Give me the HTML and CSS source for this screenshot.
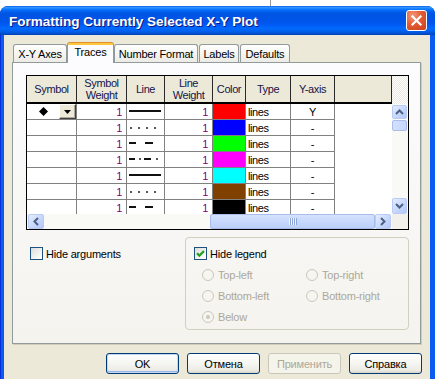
FILE: index.html
```html
<!DOCTYPE html>
<html>
<head>
<meta charset="utf-8">
<link rel="stylesheet" href="styles.css">
</head>
<body>
<div class="desk"><span class="desk-line"></span></div>
<div class="window">
  <div class="titlebar">
    <span class="title">Formatting Currently Selected X-Y Plot</span>
    <div class="close">
      <svg width="13" height="13" viewBox="0 0 13 13"><path d="M2.5 2.5 L10.5 10.5 M10.5 2.5 L2.5 10.5" stroke="#fff" stroke-width="2.2" stroke-linecap="square"/></svg>
    </div>
  </div>
  <div class="client">
    <div class="tabs">
      <div class="tab t1">X-Y Axes</div>
      <div class="tab active t2">Traces</div>
      <div class="tab t3">Number Format</div>
      <div class="tab t4">Labels</div>
      <div class="tab t5">Defaults</div>
    </div>
    <div class="panel">
      <div class="grid">
        <div class="sheet">
          <div class="row head">
            <div class="c">Symbol</div>
            <div class="c">Symbol<br>Weight</div>
            <div class="c">Line</div>
            <div class="c">Line<br>Weight</div>
            <div class="c">Color</div>
            <div class="c">Type</div>
            <div class="c">Y-axis</div>
            <div class="c"></div>
          </div>
          <div class="row">
            <div class="c sym">
              <svg class="diamond" width="9" height="9" viewBox="0 0 9 9"><polygon points="4.5,0 9,4.5 4.5,9 0,4.5" fill="#000"/></svg>
              <div class="ddbtn"><svg width="7" height="4" viewBox="0 0 7 4"><polygon points="0,0 7,0 3.5,4" fill="#000"/></svg></div>
            </div>
            <div class="c num">1</div>
            <div class="c ln"><svg width="37" height="15" viewBox="0 0 37 15"><rect x="2" y="6" width="32" height="2" fill="#111"/></svg></div>
            <div class="c num">1</div>
            <div class="c clr" style="background:#ff0000"></div>
            <div class="c typ">lines</div>
            <div class="c ya">Y</div>
            <div class="c f"></div>
          </div>
          <div class="row">
            <div class="c sym"></div>
            <div class="c num">1</div>
            <div class="c ln"><svg width="37" height="15" viewBox="0 0 37 15"><rect x="3" y="7" width="2" height="2" fill="#555"/><rect x="11" y="7" width="2" height="2" fill="#555"/><rect x="19" y="7" width="2" height="2" fill="#555"/><rect x="27" y="7" width="2" height="2" fill="#555"/></svg></div>
            <div class="c num">1</div>
            <div class="c clr" style="background:#0000ff"></div>
            <div class="c typ">lines</div>
            <div class="c ya">-</div>
            <div class="c f"></div>
          </div>
          <div class="row">
            <div class="c sym"></div>
            <div class="c num">1</div>
            <div class="c ln"><svg width="37" height="15" viewBox="0 0 37 15"><rect x="2" y="6" width="7" height="2" fill="#111"/><rect x="18" y="6" width="8" height="2" fill="#111"/></svg></div>
            <div class="c num">1</div>
            <div class="c clr" style="background:#00ff00"></div>
            <div class="c typ">lines</div>
            <div class="c ya">-</div>
            <div class="c f"></div>
          </div>
          <div class="row">
            <div class="c sym"></div>
            <div class="c num">1</div>
            <div class="c ln"><svg width="37" height="15" viewBox="0 0 37 15"><rect x="2" y="6" width="6" height="2" fill="#111"/><rect x="12" y="6" width="2" height="2" fill="#555"/><rect x="17" y="6" width="7" height="2" fill="#111"/><rect x="29" y="6" width="2" height="2" fill="#555"/></svg></div>
            <div class="c num">1</div>
            <div class="c clr" style="background:#ff00ff"></div>
            <div class="c typ">lines</div>
            <div class="c ya">-</div>
            <div class="c f"></div>
          </div>
          <div class="row">
            <div class="c sym"></div>
            <div class="c num">1</div>
            <div class="c ln"><svg width="37" height="15" viewBox="0 0 37 15"><rect x="2" y="6" width="32" height="2" fill="#111"/></svg></div>
            <div class="c num">1</div>
            <div class="c clr" style="background:#00ffff"></div>
            <div class="c typ">lines</div>
            <div class="c ya">-</div>
            <div class="c f"></div>
          </div>
          <div class="row">
            <div class="c sym"></div>
            <div class="c num">1</div>
            <div class="c ln"><svg width="37" height="15" viewBox="0 0 37 15"><rect x="3" y="7" width="2" height="2" fill="#555"/><rect x="11" y="7" width="2" height="2" fill="#555"/><rect x="19" y="7" width="2" height="2" fill="#555"/><rect x="27" y="7" width="2" height="2" fill="#555"/></svg></div>
            <div class="c num">1</div>
            <div class="c clr" style="background:#804000"></div>
            <div class="c typ">lines</div>
            <div class="c ya">-</div>
            <div class="c f"></div>
          </div>
          <div class="row">
            <div class="c sym"></div>
            <div class="c num">1</div>
            <div class="c ln"><svg width="37" height="15" viewBox="0 0 37 15"><rect x="2" y="6" width="7" height="2" fill="#111"/><rect x="18" y="6" width="8" height="2" fill="#111"/></svg></div>
            <div class="c num">1</div>
            <div class="c clr" style="background:#000000"></div>
            <div class="c typ">lines</div>
            <div class="c ya">-</div>
            <div class="c f"></div>
          </div>
        </div>
        <div class="vscroll">
          <div class="vcorner"></div>
          <div class="vtrack">
            <div class="sbtn up"><svg width="9" height="6" viewBox="0 0 9 6"><path d="M1 5 L4.5 1.5 L8 5" fill="none" stroke="#4d6185" stroke-width="2"/></svg></div>
            <div class="vthumb"></div>
            <div class="spacer"></div>
            <div class="sbtn down"><svg width="9" height="6" viewBox="0 0 9 6"><path d="M1 1 L4.5 4.5 L8 1" fill="none" stroke="#4d6185" stroke-width="2"/></svg></div>
          </div>
        </div>
        <div class="hscroll">
          <div class="sbtn left"><svg width="6" height="9" viewBox="0 0 6 9"><path d="M5 1 L1.5 4.5 L5 8" fill="none" stroke="#4d6185" stroke-width="2"/></svg></div>
          <div class="htrack"></div>
          <div class="hthumb"><span class="grip"></span></div>
          <div class="sbtn right"><svg width="6" height="9" viewBox="0 0 6 9"><path d="M1 1 L4.5 4.5 L1 8" fill="none" stroke="#4d6185" stroke-width="2"/></svg></div>
        </div>
        <div class="gcorner"></div>
      </div>

      <div class="options">
        <div class="leftopt">
          <div class="check"><span class="box"></span><span>Hide arguments</span></div>
        </div>
        <div class="group">
          <div class="check"><span class="box"><svg width="11" height="11" viewBox="0 0 11 11"><path d="M2 5.2 L4.4 7.6 L9 3" fill="none" stroke="#21a121" stroke-width="2.2"/></svg></span><span>Hide legend</span></div>
          <div class="radios">
            <div class="radio"><span class="dot"></span><span>Top-left</span></div>
            <div class="radio"><span class="dot"></span><span>Top-right</span></div>
            <div class="radio"><span class="dot"></span><span>Bottom-left</span></div>
            <div class="radio"><span class="dot"></span><span>Bottom-right</span></div>
            <div class="radio"><span class="dot sel"></span><span>Below</span></div>
          </div>
        </div>
      </div>
    </div>
    <div class="buttons">
      <div class="btn default">OK</div>
      <div class="btn">Отмена</div>
      <div class="btn disabled">Применить</div>
      <div class="btn">Справка</div>
    </div>
  </div>
</div>
</body>
</html>
```

FILE: styles.css
```css
html, body {
  margin: 0;
  padding: 0;
}
body {
  width: 435px;
  height: 379px;
  overflow: hidden;
  background: #ffffff;
  font-family: "Liberation Sans", Arial, sans-serif;
  font-size: 11px;
  color: #000;
}
.desk {
  height: 6px;
  display: flex;
}
.desk-line {
  margin-left: 270px;
  width: 1px;
  height: 6px;
  background: #9a9a9a;
}
.window {
  width: 435px;
  background: linear-gradient(to right, #0831d9 0 1px, #0a5bf0 1px);
  border-radius: 8px 8px 0 0;
}
.titlebar {
  height: 29px;
  display: flex;
  align-items: center;
  justify-content: space-between;
  padding: 0 8px 0 9px;
  border-radius: 8px 8px 0 0;
  background: linear-gradient(#0058ee 0%, #3593ff 4%, #288eff 7%, #127dff 10%, #036ffc 14%, #0262ee 18%, #0057e5 24%, #0054e3 30%, #0055eb 56%, #005bf5 66%, #026afe 76%, #0062ef 86%, #0052d6 94%, #0040ab 100%);
}
.title {
  color: #fff;
  font-weight: bold;
  font-size: 13.5px;
  letter-spacing: 0;
  text-shadow: 1px 1px 0 #0a1883;
  padding-top: 1px;
}
.close {
  width: 19px;
  height: 19px;
  border: 1px solid #fff;
  border-radius: 3px;
  background: radial-gradient(circle at 30% 25%, #f29a7c 0%, #e45b35 45%, #c8411b 100%);
  display: flex;
  align-items: center;
  justify-content: center;
}
.client {
  margin: 0 5px 0 4px;
  background: #ece9d8;
  padding: 7px 9px 9px 8px;
}
.tabs {
  display: flex;
  align-items: flex-end;
  height: 20px;
  padding-left: 1px;
}
.tab {
  box-sizing: border-box;
  height: 18px;
  border: 1px solid #919b9c;
  border-bottom: none;
  border-radius: 3px 3px 0 0;
  background: linear-gradient(#ffffff, #f3f3ef 60%, #ecebe6);
  display: flex;
  align-items: center;
  justify-content: center;
  letter-spacing: -0.2px;
  padding-top: 1px;
}
.t1 { width: 54px; }
.t2 { width: 47px; }
.t3 { width: 84px; }
.t4 { width: 40px; margin-left: 1px; }
.t5 { width: 50px; margin-left: 1px; }
.tab.active {
  position: relative;
  z-index: 1;
  height: 21px;
  margin-bottom: -1px;
  border: none;
  border-left: 1px solid #919b9c;
  border-right: 1px solid #919b9c;
  background: linear-gradient(#e68b2c 0 1px, #ffc73c 1px 3px, #fcfcfe 3px);
  padding-bottom: 2px;
}
.panel {
  box-sizing: border-box;
  height: 282px;
  border: 1px solid #919b9c;
  background: linear-gradient(#fcfcfe, #f4f3ee);
  padding: 12px 0 0 13px;
  box-shadow: 1px 1px 0 #d0cdbf;
}
.grid {
  width: 381px;
  border: 1px solid #000;
  display: grid;
  grid-template-columns: 365px 16px;
  grid-template-rows: 138px 15px;
  background: #fff;
}
.sheet {
  overflow: hidden;
  background: #fff;
  font-size: 11px;
  letter-spacing: -0.4px;
}
.row {
  display: grid;
  grid-template-columns: 50px 50px 38px 48px 33px 45px 44px 57px;
  height: 16px;
}
.row .c {
  box-sizing: border-box;
  border-right: 1px solid #808080;
  border-bottom: 1px solid #808080;
  display: flex;
  align-items: center;
  line-height: 12px;
}
.row .c.f {
  border: none;
}
.row.head {
  height: 28px;
  box-sizing: border-box;
  background: #ece9d8;
  border-bottom: 2px solid #000;
}
.row.head .c {
  border-bottom: none;
  border-right: 1px solid #2a2a2a;
  justify-content: center;
  text-align: center;
  color: #14144a;
}
.num {
  justify-content: flex-end;
  padding-right: 4px;
  color: #800080;
}
.typ {
  padding-left: 2px;
}
.ya {
  justify-content: center;
}
.ln svg {
  display: block;
}
.sym {
  justify-content: flex-start;
}
.diamond {
  margin-left: 12px;
}
.ddbtn {
  box-sizing: border-box;
  margin-left: auto;
  width: 17px;
  height: 15px;
  background: #ece9d8;
  border-top: 1px solid #fff;
  border-left: 1px solid #fff;
  border-right: 1px solid #404040;
  border-bottom: 1px solid #404040;
  box-shadow: inset -1px -1px 0 #aca899;
  display: flex;
  align-items: center;
  justify-content: center;
}
.vscroll {
  display: flex;
  flex-direction: column;
}
.vcorner {
  height: 28px;
  background: repeating-conic-gradient(#e9e7df 0% 25%, #ffffff 0% 50%) 0 0 / 2px 2px;
}
.vtrack {
  flex: 1;
  display: flex;
  flex-direction: column;
  background: #f9f9f6;
  padding: 1px 1px 0 0;
}
.sbtn {
  box-sizing: border-box;
  border: 1px solid #b7cbf6;
  border-radius: 2px;
  background: linear-gradient(135deg, #e6eefd, #c4d5fc 60%, #b4c8f6);
  display: flex;
  align-items: center;
  justify-content: center;
}
.sbtn.up { height: 14px; }
.sbtn.down { height: 16px; }
.vthumb {
  box-sizing: border-box;
  height: 11px;
  margin-top: 1px;
  border: 1px solid #a8bdeb;
  border-radius: 2px;
  background: linear-gradient(to right, #d3e0fd, #c6d6fc);
}
.spacer { flex: 1; }
.hscroll {
  display: flex;
  background: #f9f9f6;
  padding: 0 1px 0 1px;
}
.sbtn.left, .sbtn.right {
  width: 16px;
  height: 15px;
}
.htrack {
  width: 166px;
}
.hthumb {
  box-sizing: border-box;
  width: 165px;
  height: 15px;
  border: 1px solid #a8bdeb;
  border-radius: 2px;
  background: linear-gradient(#d5e2fd, #c5d6fc 60%, #bccff9);
  display: flex;
  align-items: center;
  justify-content: center;
}
.grip {
  width: 8px;
  height: 7px;
  background: repeating-linear-gradient(to right, #eef3fe 0 1px, #8da6d8 1px 2px);
}
.gcorner {
  background: #f1f0ea;
}
.options {
  display: flex;
  margin-top: 7px;
  letter-spacing: -0.2px;
}
.leftopt {
  width: 159px;
  padding: 10px 0 0 4px;
  box-sizing: border-box;
}
.check {
  display: flex;
  align-items: center;
  height: 13px;
  gap: 3px;
}
.box {
  box-sizing: border-box;
  width: 13px;
  height: 13px;
  border: 1px solid #1c5180;
  background: linear-gradient(135deg, #dcdcd7, #fbfbf9 80%, #fff);
  display: flex;
  align-items: center;
  justify-content: center;
  flex: none;
}
.group {
  box-sizing: border-box;
  width: 224px;
  height: 93px;
  border: 1px solid #d0d0bf;
  border-radius: 4px;
  padding: 9px 0 0 8px;
}
.radios {
  display: grid;
  grid-template-columns: 104px 100px;
  grid-auto-rows: 21px;
  margin: 4px 0 0 8px;
}
.radio {
  display: flex;
  align-items: center;
  gap: 4px;
  color: #aca899;
}
.dot {
  box-sizing: border-box;
  width: 12px;
  height: 12px;
  border-radius: 50%;
  border: 1px solid #cac8bb;
  background: #f6f5f0;
  display: flex;
  align-items: center;
  justify-content: center;
}
.dot.sel::after {
  content: "";
  width: 4px;
  height: 4px;
  border-radius: 50%;
  background: #cac8bb;
}
.buttons {
  display: flex;
  justify-content: flex-end;
  gap: 8px;
  margin: 9px -1px 0 0;
}
.btn {
  box-sizing: border-box;
  width: 73px;
  height: 21px;
  border: 1px solid #003c74;
  border-radius: 3px;
  background: linear-gradient(#ffffff, #f5f5f1 50%, #ecebe6 85%, #d8d3c8);
  display: flex;
  align-items: center;
  justify-content: center;
  letter-spacing: -0.2px;
}
.btn.default {
  box-shadow: inset 0 0 0 1px #c2d6f6, inset 0 -1px 0 1px #99b6ea;
}
.btn.disabled {
  border-color: #c9c7ba;
  background: #f5f4ea;
  color: #aca899;
}
```
